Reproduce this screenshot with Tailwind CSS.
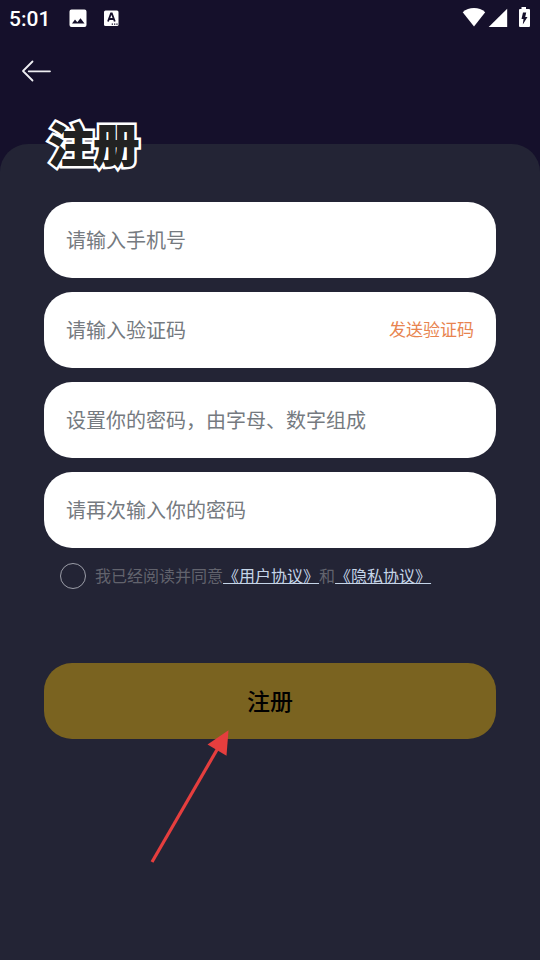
<!DOCTYPE html>
<html lang="zh-CN">
<head>
<meta charset="utf-8">
<meta name="viewport" content="width=device-width, initial-scale=1">
<title>注册</title>
<script src="https://cdn.jsdelivr.net/npm/@tailwindcss/browser@4"></script>
</head>
<body class="flex min-h-screen flex-col bg-[#15102b] font-['Noto_Sans_CJK_SC',sans-serif]">
  <div class="flex h-9 items-center justify-between pl-[9px] pr-2 text-white">
    <div class="flex items-center">
      <span class="w-[60px] pt-px font-[Roboto,sans-serif] text-[21px] leading-9 font-medium">5:01</span>
      <svg class="mr-[16px] size-[19px]" viewBox="0 0 19 19" aria-hidden="true">
        <path fill="#fff" fill-rule="evenodd" d="M2.500.5h13a2 2 0 0 1 2 2v13.500a2 2 0 0 1-2 2h-13a2 2 0 0 1-2-2V2.500a2 2 0 0 1 2-2ZM3 14.500h12.500L11.500 9.200 8.300 13.200 6 10.500Z"/>
      </svg>
      <svg class="size-4" viewBox="0 0 16 16" aria-hidden="true">
        <rect x="0" y=".5" width="14.500" height="15.500" rx="1.500" fill="#fff"/>
        <path d="M4 11.500 7 3.500h.8l3 8M5.100 9h4.600" fill="none" stroke="#15102b" stroke-width="1.800"/>
        <path d="M7.700 13.500h1.300v1.300h-1.300zM10 13.500h1.300v1.300H10zM12.300 13.500h1.300v1.300h-1.300z" fill="#15102b"/>
      </svg>
    </div>
    <svg class="h-6 w-[70px]" viewBox="0 0 70 24" fill="#fff" aria-hidden="true">
      <path d="M.7 6.200Q5.500 2 12 2t11.200 4.200L12 20.500Z"/>
      <path d="M45.200 2.700V21H26.700Z"/>
      <path fill-rule="evenodd" d="M59.500 1h4.500v2h3a1 1 0 0 1 1 1v16a1 1 0 0 1-1 1h-9a1 1 0 0 1-1-1V4a1 1 0 0 1 1-1h1.500ZM61 6.500 59.500 13h2l-.7 5.500L65.500 11h-2.300l1-4.500Z"/>
    </svg>
  </div>
  <header class="h-[108px] px-5 pt-[23px]">
    <button type="button" aria-label="返回" class="block">
      <svg class="h-6 w-8" viewBox="0 0 32 24" fill="none" stroke="#eeeef2" stroke-width="1.800" stroke-linecap="round" stroke-linejoin="round" aria-hidden="true"><path d="M12.500 2.500 3 12l9.500 9.500M8.700 12.300H30"/></svg>
    </button>
  </header>
  <main class="flex-1 rounded-t-[28px] bg-[#232435] px-11">
    <h1 data-outline="注册" class="relative isolate -mt-[25px] mb-[35px] pl-[5px] text-[45px] leading-12 font-bold text-[#222] [-webkit-text-stroke:2px_#222] before:absolute before:-z-10 before:text-white before:content-[attr(data-outline)] before:[-webkit-text-stroke:7px_white]">注册</h1>
    <form class="flex flex-col">
      <div class="flex flex-col gap-[14px]">
        <input type="tel" aria-label="手机号" placeholder="请输入手机号" class="h-[76px] w-full rounded-[28px] bg-white px-[22px] pb-0.5 text-xl text-[#222] outline-none placeholder:text-[#757a80]">
        <div class="flex h-[76px] items-center rounded-[28px] bg-white px-[22px] pb-0.5">
          <input type="text" aria-label="验证码" placeholder="请输入验证码" class="h-full min-w-0 flex-1 text-xl text-[#222] outline-none placeholder:text-[#757a80]">
          <button type="button" class="text-[17px] text-[#e8844f]">发送验证码</button>
        </div>
        <input type="password" aria-label="密码" placeholder="设置你的密码，由字母、数字组成" class="h-[76px] w-full rounded-[28px] bg-white px-[22px] pb-0.5 text-xl text-[#222] outline-none placeholder:text-[#757a80]">
        <input type="password" aria-label="确认密码" placeholder="请再次输入你的密码" class="h-[76px] w-full rounded-[28px] bg-white px-[22px] pb-0.5 text-xl text-[#222] outline-none placeholder:text-[#757a80]">
      </div>
      <div class="mt-[15px] flex items-center gap-[9px] pl-4 text-base leading-6 text-[#62636d]">
        <input id="agree" type="checkbox" class="size-[26px] shrink-0 appearance-none rounded-full border border-[#9c9ea8] checked:bg-[#c9d8e8]">
        <p class="pb-0.5"><label for="agree">我已经阅读并同意</label><a href="#terms" class="text-[#c5d5e8] underline">《用户协议》</a>和<a href="#privacy" class="text-[#c5d5e8] underline">《隐私协议》</a></p>
      </div>
      <div class="relative mt-[74px]">
        <button type="submit" class="h-[76px] w-full rounded-[28px] bg-[#7a6320] pb-0.5 text-[23px] font-medium text-black">注册</button>
        <svg class="pointer-events-none absolute top-[65px] left-1/2 -ml-[122px] h-[138px] w-[84px]" viewBox="0 0 84 138" aria-hidden="true">
          <path d="M4 134 70 20" stroke="#e53e3e" stroke-width="3.200"/>
          <path d="M80.500 2.300 59.500 16.500 78.500 27.800Z" fill="#e53e3e"/>
        </svg>
      </div>
    </form>
  </main>
</body>
</html>
